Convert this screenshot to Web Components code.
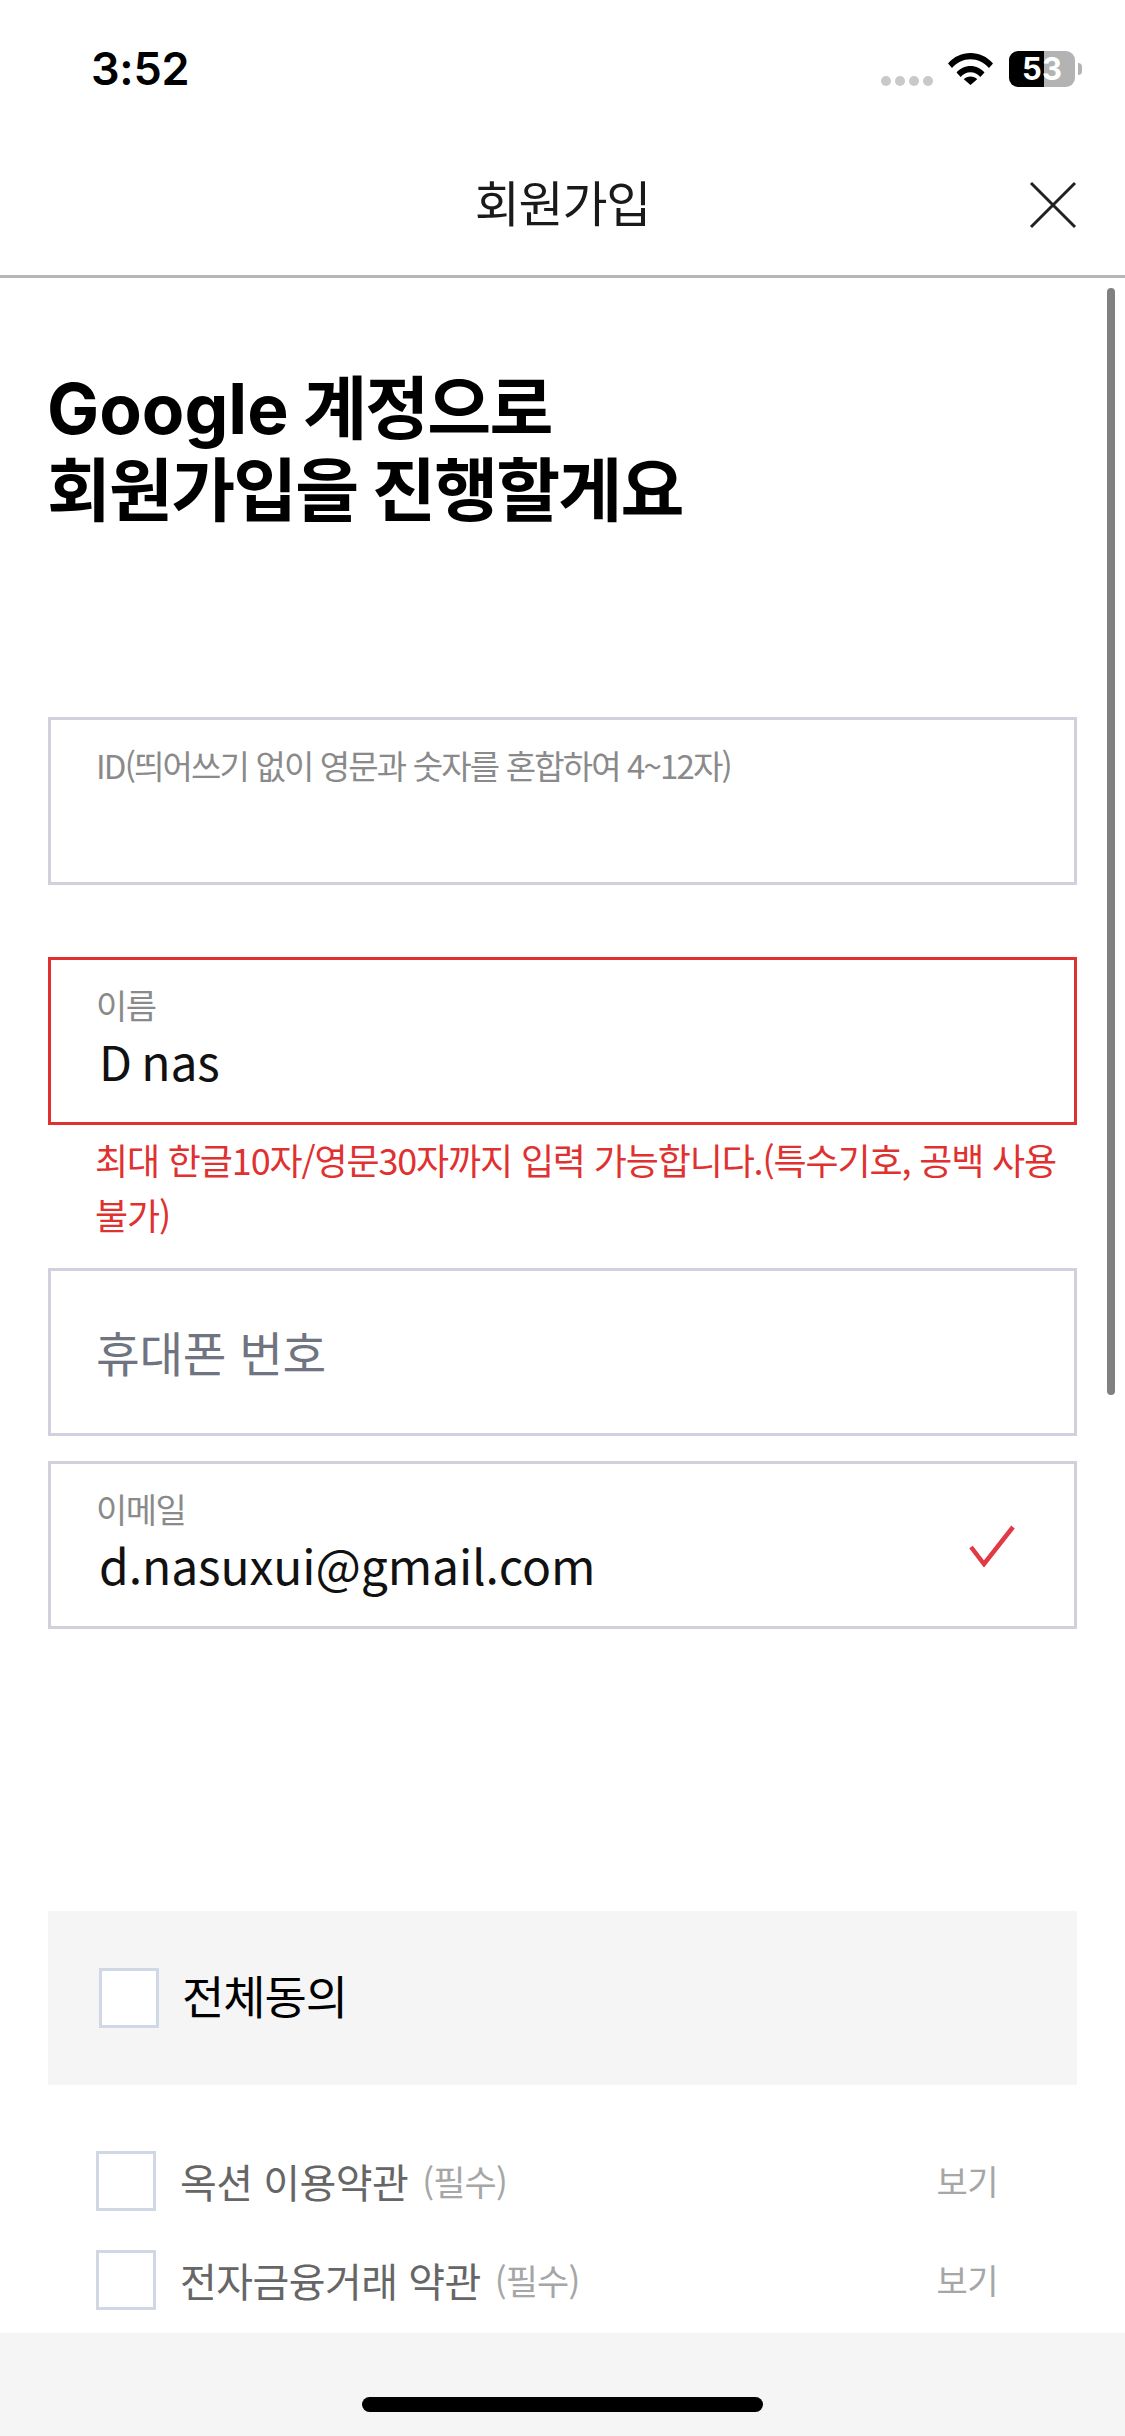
<!DOCTYPE html>
<html lang="ko"><head><meta charset="utf-8"><title>회원가입</title>
<style>
html,body{margin:0;padding:0;background:#fff}
body{width:1125px;height:2436px;overflow:hidden;font-family:"Noto Sans CJK KR","Noto Sans",sans-serif;display:flex;flex-direction:column;position:relative}
</style></head><body>
<status-bar></status-bar>
<nav-header>회원가입</nav-header>
<signup-body>
  <text-field label="ID(띄어쓰기 없이 영문과 숫자를 혼합하여 4~12자)" state="top" style="margin-bottom:72px;--label-size:33px;--label-ls:-1.85px"></text-field>
  <text-field label="이름" value="D nas" state="error" style="--value-ws:-4px">최대 한글10자/영문30자까지 입력 가능합니다.(특수기호, 공백 사용 불가)</text-field>
  <text-field placeholder="휴대폰 번호" style="margin-bottom:25px"></text-field>
  <text-field label="이메일" value="d.nasuxui@gmail.com" state="valid"></text-field>
  <agree-all>전체동의</agree-all>
  <agree-row note="(필수)">옥션 이용약관</agree-row>
  <agree-row note="(필수)">전자금융거래 약관</agree-row>
</signup-body>
<home-bar></home-bar>
<scroll-thumb></scroll-thumb>
<script>
function def(name, css, html){
  customElements.define(name, class extends HTMLElement{
    connectedCallback(){
      if(this.shadowRoot) return;
      const r=this.attachShadow({mode:'open'});
      r.innerHTML='<style>'+css+'</style>'+(typeof html==='function'?html(this):html);
    }
  });
}
const esc=s=>String(s||'').replace(/&/g,'&amp;').replace(/</g,'&lt;');
def('status-bar',`
:host{display:flex;height:101px;flex:none;align-items:flex-start;box-sizing:border-box;padding:0 43px 0 91px}
.t{font:600 45px/1 Inter,sans-serif;color:#000;margin-top:46px;letter-spacing:-.3px}
.r{margin-left:auto;display:flex;align-items:flex-start}
.dots{display:flex;gap:4px;margin-top:76px;margin-right:15px}
.dots i{width:10px;height:10px;border-radius:50%;background:#c9c9c9;display:block}
svg{display:block;margin-top:52px;margin-right:16px}
.bat{position:relative;width:66px;height:36px;margin-top:51px;border-radius:9px;overflow:hidden;background:linear-gradient(90deg,#000 0 35px,#b3b3b3 35px);color:#fff;font:700 31px/36px Inter,sans-serif;text-align:center}
.nub{width:4px;height:12px;margin:63px 0 0 3px;background:#b3b3b3;border-radius:0 6px 6px 0}
`,`<span class="t">3:52</span><div class="r"><div class="dots"><i></i><i></i><i></i><i></i></div>
<svg width="45" height="33" viewBox="0 0 45 33"><path d="M0 11.5C6 4.5 13.800 1 22.500 1S39 4.500 45 11.500L41 16C36 10.500 29.500 7.300 22.500 7.300S9 10.500 4 16Z" fill="#000"/><path d="M8.500 20.500C12 16.500 17 14 22.500 14S33 16.500 36.500 20.500L32.300 25C29.800 22 26.300 20.300 22.500 20.300S15.200 22 12.700 25Z" fill="#000"/><path d="M15.800 27.200C17.500 25.500 19.900 24.500 22.500 24.500S27.500 25.500 29.200 27.200L22.500 33Z" fill="#000"/></svg>
<div class="bat">53</div><div class="nub"></div></div>`);
def('nav-header',`
:host{display:flex;flex:none;height:177px;box-sizing:border-box;border-bottom:3px solid #b6b6b6;position:relative;align-items:center;justify-content:center;padding-top:24px;font:400 49px/1 "Noto Sans CJK KR",sans-serif;color:#1a1a1a;letter-spacing:-1.2px}
svg{position:absolute;left:1029px;top:80px}
`,`<slot></slot><svg width="48" height="48" viewBox="0 0 48 48"><path d="M2 2L46 46M46 2L2 46" stroke="#222" stroke-width="3" fill="none"/></svg>`);
def('signup-body',`
:host{display:block;flex:1;min-height:0;overflow:hidden;padding:0 48px;box-sizing:border-box}
h1{margin:0 0 0 -1px;padding:90px 0 0 0;height:439px;box-sizing:border-box;font:700 69.500px/82px Inter,"Noto Sans CJK KR",sans-serif;color:#000;letter-spacing:-1.85px}
h1 span{letter-spacing:0}
`,`<h1><span>Google</span> 계정으로<br>회원가입을 진행할게요</h1><slot></slot>`);
def('text-field',`
:host{display:block;font-family:"Noto Sans CJK KR",sans-serif}
.b{height:168px;box-sizing:border-box;border:3px solid #d0d1dd;padding:0 46px 0 45px;position:relative;display:flex;flex-direction:column;justify-content:flex-start;background:#fff}
:host([state=error]) .b{border-color:#e03131}
.l{font-size:var(--label-size,34px);line-height:46px;color:#8a8a8a;letter-spacing:var(--label-ls,-1.5px);margin-top:22px;white-space:nowrap}
.v{font-size:48px;line-height:60px;color:#111;margin:2px 0 0 3px;white-space:nowrap;letter-spacing:-.1px;word-spacing:var(--value-ws,0)}
.p{font-size:47.500px;line-height:162px;color:#6f7480;letter-spacing:-.3px}
.e{display:block;font-size:36px;line-height:55px;color:#e03131;padding:7px 0 26px 47px;letter-spacing:-1.15px;width:975px}
svg{position:absolute;left:918px;top:61px}
`,h=>{
  const a=k=>esc(h.getAttribute(k));
  let s='<div class="b">';
  if(h.getAttribute('label')) s+='<span class="l">'+a('label')+'</span>';
  if(h.getAttribute('value')) s+='<span class="v">'+a('value')+'</span>';
  if(h.getAttribute('placeholder')) s+='<span class="p">'+a('placeholder')+'</span>';
  if(h.getAttribute('state')==='valid') s+='<svg width="46" height="42" viewBox="0 0 46 42"><path d="M2 22L15 39L44 2" fill="none" stroke="#e23a45" stroke-width="4.500"/></svg>';
  s+='</div>';
  if(h.getAttribute('state')==='error') s+='<span class="e"><slot></slot></span>';
  return s;
});
def('agree-all',`
:host{display:flex;align-items:center;height:174px;margin-top:282px;margin-bottom:66px;background:#f5f5f5;padding:0 0 0 51px;box-sizing:border-box;font-size:46px;color:#000;letter-spacing:-1.1px}
i{width:60px;height:60px;box-sizing:border-box;border:3px solid #d0d7e5;background:#fff;margin-right:23px;display:block;margin-top:0}
span{margin-top:-8px}
`,`<i></i><span><slot></slot></span>`);
def('agree-row',`
:host{display:flex;align-items:center;height:60px;margin:0 0 39px 0;padding:0 79px 0 48px;box-sizing:border-box;font-size:40px;color:#666;letter-spacing:-.55px}
i{width:60px;height:60px;box-sizing:border-box;border:3px solid #d0d7e5;background:#fff;margin-right:24px;display:block}
span{margin-top:-1px}
.n{font-size:35px;color:#a6a6a6;margin-left:14px;letter-spacing:-.8px}
.s{margin-left:auto;font-size:34px;color:#a6a6a6;letter-spacing:-.5px}
`,h=>`<i></i><span><slot></slot></span><span class="n">${esc(h.getAttribute('note'))}</span><span class="s">보기</span>`);
def('home-bar',`
:host{display:flex;flex:none;height:103px;background:#f5f5f5;justify-content:center;align-items:flex-start;box-sizing:border-box;padding-top:64px}
i{display:block;width:401px;height:15px;border-radius:8px;background:#000}
`,`<i></i>`);
def('scroll-thumb',`
:host{position:absolute;left:1107px;top:288px;width:8px;height:1107px;border-radius:4px;background:#808080}
`,``);
</script>
</body></html>
